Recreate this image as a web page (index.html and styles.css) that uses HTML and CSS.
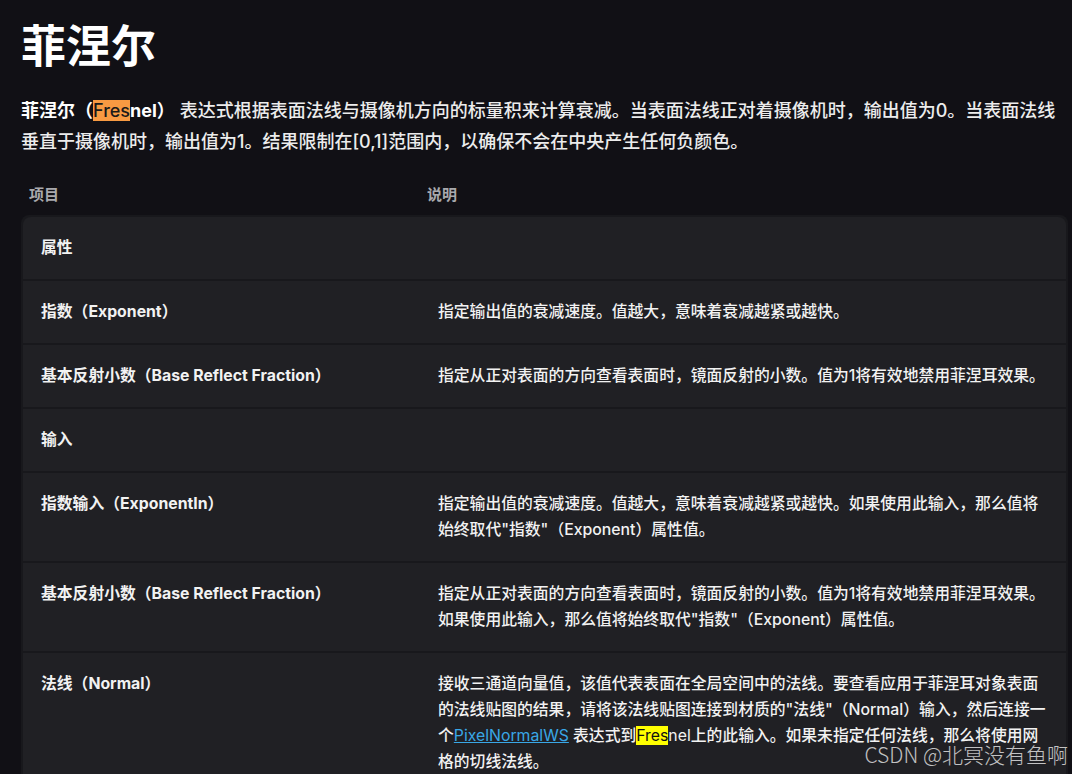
FILE: index.html
```html
<!DOCTYPE html>
<html>
  <head>
    <meta charset="utf-8" />
    <title>菲涅尔</title>
    <link rel="stylesheet" href="styles.css">
  </head>
  <body>
    <div class="page">
      <h1>菲涅尔</h1>

      <p class="intro">
        <b>菲涅尔（<span class="hl">Fres</span>nel）</b> 表达式根据表面法线与摄像机方向的标量积来计算衰减。当表面法线正对着摄像机时，输出值为0。当表面法线垂直于摄像机时，输出值为1。结果限制在[0,1]范围内，以确保不会在中央产生任何负颜色。
      </p>

      <div class="table">
        <div class="head">
          <div class="col-item">项目</div>
          <div class="col-desc">说明</div>
        </div>

        <div class="body">
          <div class="row section">
            <div class="col-item">属性</div>
          </div>
          <div class="row">
            <div class="col-item">指数（Exponent）</div>
            <div class="col-desc">指定输出值的衰减速度。值越大，意味着衰减越紧或越快。</div>
          </div>
          <div class="row">
            <div class="col-item">基本反射小数（Base Reflect Fraction）</div>
            <div class="col-desc">指定从正对表面的方向查看表面时，镜面反射的小数。值为1将有效地禁用菲涅耳效果。</div>
          </div>
          <div class="row section">
            <div class="col-item">输入</div>
          </div>
          <div class="row">
            <div class="col-item">指数输入（ExponentIn）</div>
            <div class="col-desc">指定输出值的衰减速度。值越大，意味着衰减越紧或越快。如果使用此输入，那么值将始终取代"指数"（Exponent）属性值。</div>
          </div>
          <div class="row">
            <div class="col-item">基本反射小数（Base Reflect Fraction）</div>
            <div class="col-desc">指定从正对表面的方向查看表面时，镜面反射的小数。值为1将有效地禁用菲涅耳效果。如果使用此输入，那么值将始终取代"指数"（Exponent）属性值。</div>
          </div>
          <div class="row">
            <div class="col-item">法线（Normal）</div>
            <div class="col-desc">接收三通道向量值，该值代表表面在全局空间中的法线。要查看应用于菲涅耳对象表面的法线贴图的结果，请将该法线贴图连接到材质的"法线"（Normal）输入，然后连接一个<a href="#">PixelNormalWS</a> 表达式到<span class="plain"><span class="hl-yellow">Fres</span>nel</span>上的此输入。如果未指定任何法线，那么将使用网格的切线法线。</div>
          </div>
        </div>
      </div>
    </div>

    <div class="watermark">CSDN @北冥没有鱼啊</div>
  </body>
</html>
```

FILE: styles.css
```css
html, body {
  margin: 0;
  height: 100%;
  overflow: hidden;
}
body {
  background-color: #111015;
  color: #ececec;
  font-family: Inter, "Noto Sans CJK SC", sans-serif;
}
.page {
  padding: 20px 4px 0 21px;
}
h1 {
  font-size: 45px;
  font-weight: 700;
  line-height: 54px;
  margin: 0 0 21px 0;
  color: #ffffff;
}
.intro {
  font-size: 18px;
  line-height: 31px;
  margin: 0 0 26px 0;
  font-weight: 500;
}
.intro b {
  font-weight: 700;
  color: #ffffff;
}
.hl {
  background-color: #f79a42;
  color: #1a1a1a;
  font-weight: 500;
}
.head {
  display: flex;
  color: #a9a9ad;
  font-size: 15px;
  font-weight: 600;
  line-height: 24px;
  padding: 0 2px 8px 2px;
}
.head .col-item {
  padding-left: 6px;
}
.head .col-desc {
  padding-left: 7px;
}
.col-item {
  width: 397px;
  flex-shrink: 0;
  box-sizing: border-box;
}
.col-desc {
  flex-grow: 1;
}
.body {
  background-color: #18181c;
  padding: 2px 2px 0 2px;
  display: flex;
  flex-direction: column;
  gap: 2px;
  border-radius: 8px 8px 0 0;
}
.row {
  display: flex;
  background-color: #202024;
  font-size: 15.8px;
  line-height: 26px;
  color: #f2f2f2;
}
.row:first-child {
  border-radius: 8px 8px 0 0;
}
.row .col-item {
  padding: 18px 18px;
  font-weight: 700;
}
.row .col-desc {
  padding: 18px 20px 18px 18px;
  font-weight: 500;
}
.row.section .col-item {
  font-weight: 600;
}
a {
  color: #39a7e6;
  font-weight: 400;
}
.plain {
  font-weight: 400;
}
.hl-yellow {
  background-color: #ffff00;
  color: #111111;
}
.watermark {
  position: absolute;
  right: 4px;
  bottom: 7px;
  font-family: "Noto Sans CJK SC", sans-serif;
  font-size: 21px;
  font-weight: 300;
  line-height: 25px;
  color: rgba(225, 225, 225, 0.85);
}
```
